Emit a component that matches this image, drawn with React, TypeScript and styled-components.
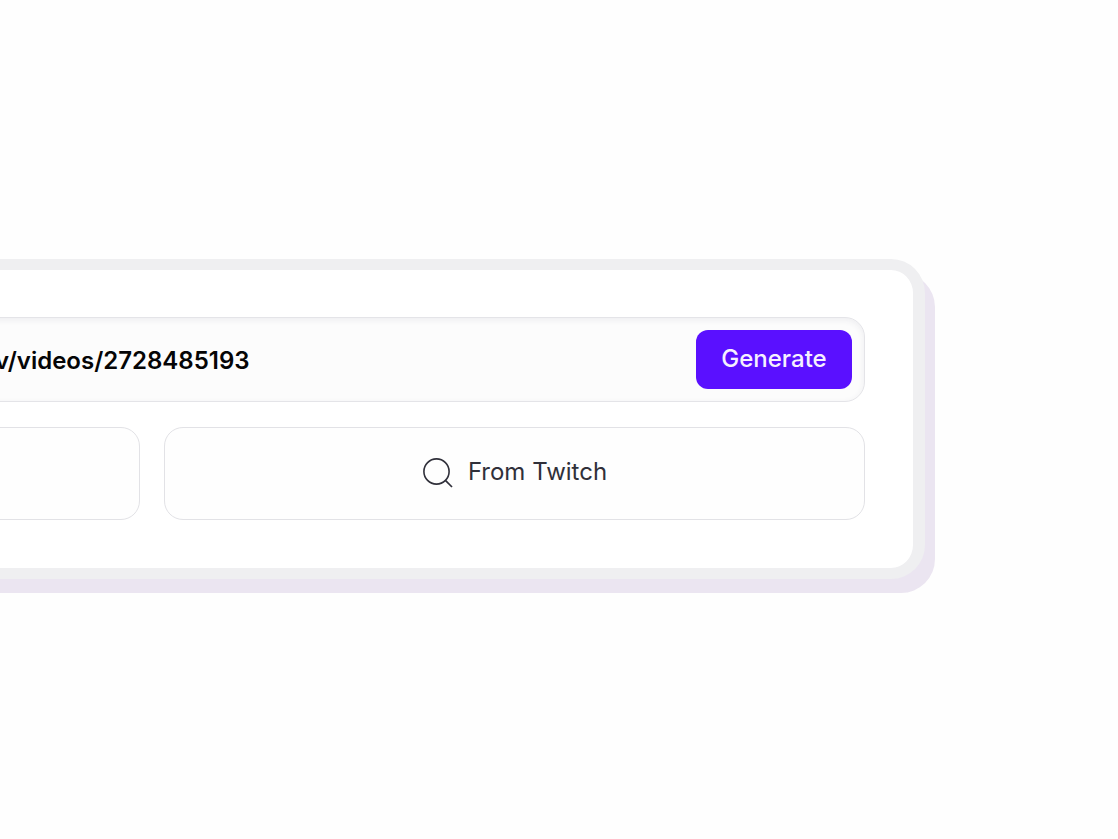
import React, { useState } from "react";
import styled, { createGlobalStyle } from "styled-components";

const GlobalStyle = createGlobalStyle`
  * {
    box-sizing: border-box;
  }

  body {
    margin: 0;
    background: #fefefe;
    font-family: Inter, "Liberation Sans", sans-serif;
  }
`;

const Page = styled.main`
  display: flex;
  align-items: center;
  min-height: 100vh;
  padding: 0 193px 2px 0;
  overflow: hidden;
`;

const Card = styled.form`
  display: flex;
  flex-direction: column;
  flex: 1;
  gap: 25px;
  margin-left: -60px;
  padding: 47px 48px 48px 0;
  border: solid #efeff1;
  border-width: 11px 12px;
  border-radius: 34px;
  background: #ffffff;
  box-shadow: 10px 14px 0 #ebe5f1;
`;

const LinkField = styled.div`
  display: flex;
  align-items: center;
  height: 85px;
  padding: 0 12px 0 42px;
  border: 1px solid #e4e4e8;
  border-radius: 20px;
  background: #fcfcfc;
  box-shadow: inset 0 2px 6px #ededf0;
`;

const LinkInput = styled.input`
  flex: 1;
  min-width: 0;
  padding: 3px 0 0;
  border: 0;
  outline: 0;
  background: transparent;
  color: #050506;
  font: 600 24px/32px Inter, "Liberation Sans", sans-serif;
`;

const GenerateButton = styled.button`
  width: 156px;
  height: 59px;
  padding: 0;
  border: 0;
  border-radius: 12px;
  background: #5a10ff;
  color: #f6f1ff;
  font: 500 24px/32px Inter, "Liberation Sans", sans-serif;
`;

const Sources = styled.div`
  display: grid;
  grid-template-columns: 188px 1fr;
  gap: 24px;
`;

const SourceButton = styled.button`
  display: flex;
  align-items: center;
  justify-content: center;
  gap: 14px;
  height: 93px;
  padding: 0 0 2px;
  border: 1px solid #e2e2e6;
  border-radius: 19px;
  background: #fefefe;
  color: #30303a;
  font: 400 24px/32px Inter, "Liberation Sans", sans-serif;
`;

const SearchIcon = () => (
  <svg width="32" height="32" viewBox="0 0 32 32" fill="none" aria-hidden="true">
    <circle cx="14.5" cy="15.5" r="12.6" stroke="currentColor" strokeWidth="1.6" />
    <path d="M23.4 24.4L30 31" stroke="currentColor" strokeWidth="1.7" />
  </svg>
);

export default function App() {
  const [link, setLink] = useState("v/videos/2728485193");

  return (
    <>
      <GlobalStyle />
      <Page>
        <Card onSubmit={(event) => event.preventDefault()}>
          <LinkField>
            <LinkInput
              aria-label="Video link"
              value={link}
              onChange={(event) => setLink(event.target.value)}
            />
            <GenerateButton type="submit">Generate</GenerateButton>
          </LinkField>
          <Sources>
            <SourceButton type="button" aria-label="Upload" />
            <SourceButton type="button">
              <SearchIcon />
              From Twitch
            </SourceButton>
          </Sources>
        </Card>
      </Page>
    </>
  );
}
